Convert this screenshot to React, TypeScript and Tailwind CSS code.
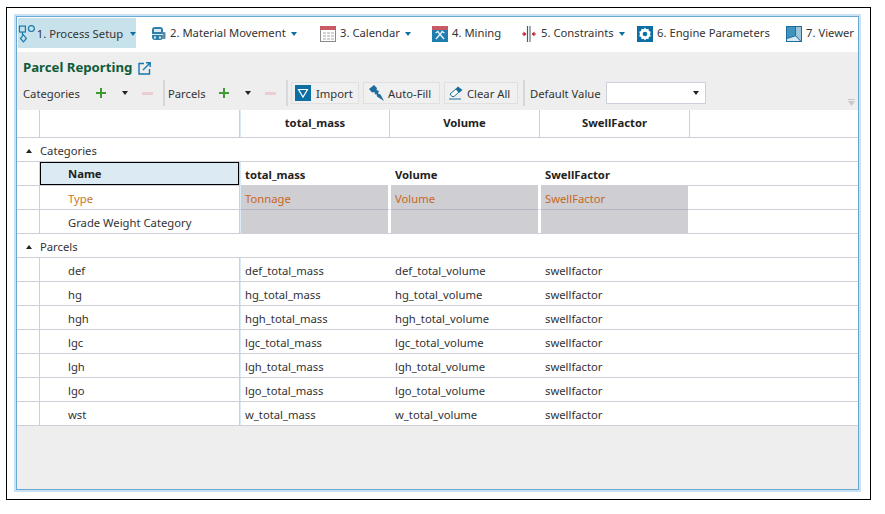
import type { ReactNode } from "react";

const parcels = [
  ["def", "def_total_mass", "def_total_volume"],
  ["hg", "hg_total_mass", "hg_total_volume"],
  ["hgh", "hgh_total_mass", "hgh_total_volume"],
  ["lgc", "lgc_total_mass", "lgc_total_volume"],
  ["lgh", "lgh_total_mass", "lgh_total_volume"],
  ["lgo", "lgo_total_mass", "lgo_total_volume"],
  ["wst", "w_total_mass", "w_total_volume"],
];

function Caret({ className }: { className: string }) {
  return (
    <svg width="6" height="4" viewBox="0 0 6 4" className={className}>
      <path d="M0 0h6L3 4z" fill="currentColor" />
    </svg>
  );
}

function ProcessIcon() {
  return (
    <svg width="19" height="20" viewBox="0 0 19 20" fill="none" stroke="#1478a8" strokeWidth="1.2">
      <rect x="1.500" y="2" width="6" height="6" />
      <circle cx="13.500" cy="4.500" r="3" />
      <path d="M4.500 8v3" />
      <path d="M5.500 11l3 3.500-3 3.500-3-3.500z" />
    </svg>
  );
}

function MovementIcon() {
  return (
    <svg width="15" height="15" viewBox="0 0 15 15" className="ml-[1px]">
      <rect x="1" y="1" width="11" height="13" rx="3" fill="#2f7fa8" />
      <rect x="3" y="3" width="7" height="3" fill="#d8ebf3" />
      <rect x="11" y="6" width="3.500" height="7" rx="1" fill="#5b8fa8" />
      <rect x="1" y="8" width="11" height="1" fill="#d8ebf3" />
      <rect x="3" y="10.500" width="2" height="2" fill="#d8ebf3" />
      <rect x="8" y="10.500" width="2" height="2" fill="#d8ebf3" />
    </svg>
  );
}

function CalendarIcon() {
  return (
    <svg width="16" height="16" viewBox="0 0 16 16">
      <rect x="0.500" y="0.500" width="15" height="15" fill="#fff" stroke="#8a8a8a" />
      <rect width="16" height="4" fill="#c75a63" />
      <path d="M3 6h3v2H3zm4 0h3v2H7zm4 0h3v2h-3zM3 9h3v2H3zm4 0h3v2H7zm4 0h3v2h-3zM3 12h3v2H3zm4 0h3v2H7zm4 0h3v2h-3z" fill="#d2d2d2" />
    </svg>
  );
}

function MiningIcon() {
  return (
    <svg width="16" height="16" viewBox="0 0 16 16">
      <rect width="16" height="16" fill="#1f7eae" />
      <rect width="16" height="4" fill="#c75a63" />
      <path d="M4 13l6-7M12 13L6 6M3.500 7l3-2M12.500 7l-3-2" stroke="#e6f0f5" strokeWidth="1.400" fill="none" />
    </svg>
  );
}

function ConstraintsIcon() {
  return (
    <svg width="16" height="16" viewBox="0 0 16 16">
      <path d="M6.500 0v16" stroke="#0e6f9f" strokeWidth="1.200" />
      <path d="M9 0v16" stroke="#4a5a66" strokeWidth="1" />
      <path d="M1 8h2M13 8h2" stroke="#c0202c" />
      <path d="M5.500 8L2.500 5.500v5zM10.500 8l3-2.500v5z" fill="#c0202c" />
    </svg>
  );
}

function EngineIcon() {
  return (
    <svg width="16" height="16" viewBox="0 0 16 16">
      <rect width="16" height="16" fill="#0b6fa4" />
      <path d="M8 1.500l1.300 1.800 2.100-.5.500 2.100 1.900.9-.8 2.200.8 2.200-1.900.9-.5 2.100-2.100-.5L8 14.500l-1.300-1.800-2.100.5-.5-2.100-1.900-.9.8-2.200-.8-2.200 1.900-.9.500-2.100 2.100.5z" fill="#fff" />
      <circle cx="8" cy="8" r="2.300" fill="#0b6fa4" />
    </svg>
  );
}

function ViewerIcon() {
  return (
    <svg width="16" height="16" viewBox="0 0 16 16">
      <rect width="16" height="16" fill="#1c6d9c" />
      <path d="M1 1h8v8.500L1 12z" fill="#3f94bd" />
      <path d="M10 1h5v14l-5-5.500z" fill="#9cc6da" />
      <path d="M1 13l8.500-2.700L14 15H1z" fill="#d9eaf2" />
    </svg>
  );
}

function Tab({ icon, label, caret, className }: { icon: ReactNode; label: string; caret?: boolean; className: string }) {
  return (
    <div className={`flex h-[33px] shrink-0 items-center ${className}`}>
      <span className="flex w-[20px] shrink-0">{icon}</span>
      <span className="whitespace-nowrap text-[#333]">{label}</span>
      {caret && <Caret className="ml-[5px] text-[#0e6f9f]" />}
    </div>
  );
}

function Plus() {
  return (
    <svg width="12" height="12" viewBox="0 0 12 12" className="shrink-0">
      <path d="M5 1h2v4h4v2H7v4H5V7H1V5h4z" fill="#3f9a35" />
    </svg>
  );
}

function Minus() {
  return <div className="h-[3px] w-[11px] bg-[#eccdd2]" />;
}

function Separator({ className }: { className: string }) {
  return <div className={`h-[26px] w-[2px] shrink-0 bg-[#d7d7dd] ${className}`} />;
}

function ToolButton({ icon, label, className }: { icon: ReactNode; label: string; className: string }) {
  return (
    <div className={`flex h-[22px] shrink-0 items-center border border-[#e0e0e0] bg-[#f0f0f0] text-[#333] ${className}`}>
      {icon}
      <span className="whitespace-nowrap pt-[2px]">{label}</span>
    </div>
  );
}

function Row({ name, a, b, c, nameClass = "", valueClass = "", shaded = "", strong = false, selected = false }: {
  name: string; a: string; b: string; c: string; nameClass?: string; valueClass?: string; shaded?: string; strong?: boolean; selected?: boolean;
}) {
  const cell = `flex items-center pl-[4px] ${shaded ? `bg-[#cfced2] ${shaded}` : "pt-[3px]"} ${valueClass} ${strong ? "font-bold text-[#222]" : ""}`;
  return (
    <div className="flex h-[24px] border-b border-[#cfcfd8] text-[#333]">
      <div className="w-[22px] shrink-0" />
      <div className={`flex w-[201px] shrink-0 border-x border-[#cfcfd8] ${nameClass}`}>
        {selected ? (
          <div className="flex w-[199px] items-center border border-black bg-[#dcebf3] pl-[27px] pt-[2px] font-bold text-[#222]">{name}</div>
        ) : (
          <div className="flex items-center pl-[28px] pt-[3px]">{name}</div>
        )}
      </div>
      <div className={`w-[150px] border-l border-l-[#d9ebf5] ${shaded ? "border-r-2 border-r-white" : ""} ${cell}`}>{a}</div>
      <div className={`w-[150px] border-l border-l-white ${shaded ? "border-r-2 border-r-white" : ""} ${cell}`}>{b}</div>
      <div className={`w-[148px] border-l border-l-white ${cell}`}>{c}</div>
    </div>
  );
}

function GroupRow({ label }: { label: string }) {
  return (
    <div className="flex h-[24px] items-center border-b border-[#cfcfd8] pt-[2px] text-[#333]">
      <svg width="6" height="4" viewBox="0 0 6 4" className="ml-[9px] text-[#222]">
        <path d="M3 0l3 4H0z" fill="currentColor" />
      </svg>
      <span className="ml-[8px] pt-[1px]">{label}</span>
    </div>
  );
}

export default function App() {
  return (
    <div className="h-[514px] w-[885px] bg-white pl-[6px] pt-[7px] font-['Noto_Sans','Open_Sans',sans-serif] text-[11.25px]">
      <div className="h-[493px] w-[865px] border border-black pl-[7px] pt-[6px]">
        <div className="h-[478px] w-[847px] bg-[#c9e2f5] p-[2px]">
          <div className="flex h-full flex-col border border-[#6aa8cf] bg-[#eeeeee]">
            <div className="flex h-[35px] shrink-0 overflow-hidden bg-white">
              <div className="ml-[1px] mt-[1px] flex h-[30px] w-[118px] shrink-0 items-center bg-[#c8e2ec] pt-[2px]">
                <ProcessIcon />
                <span className="whitespace-nowrap text-[#333]">1. Process Setup</span>
                <Caret className="ml-[7px] text-[#0e6f9f]" />
              </div>
              <Tab className="ml-[14px] w-[170px]" icon={<MovementIcon />} label="2. Material Movement" caret />
              <Tab className="w-[112px]" icon={<CalendarIcon />} label="3. Calendar" caret />
              <Tab className="w-[89px]" icon={<MiningIcon />} label="4. Mining" />
              <Tab className="w-[116px]" icon={<ConstraintsIcon />} label="5. Constraints" caret />
              <Tab className="w-[149px]" icon={<EngineIcon />} label="6. Engine Parameters" />
              <Tab className="w-[70px]" icon={<ViewerIcon />} label="7. Viewer" />
            </div>
            <div className="relative h-[58px] shrink-0">
              <div className="flex h-[30px] items-center pl-[6px] pt-[2px]">
                <span className="text-[13.2px] font-bold text-[#0f5c3a]">Parcel Reporting</span>
                <svg width="13" height="13" viewBox="0 0 13 13" fill="none" className="ml-[6px]" stroke="#1478b0" strokeWidth="1.400">
                  <path d="M6 1.500H1v10.500h10.500V7" />
                  <path d="M5 8l7-7M8 .8h4.200V5" />
                </svg>
              </div>
              <div className="flex h-[22px] items-center pl-[6px] text-[#333]">
                <span className="w-[72px] shrink-0 whitespace-nowrap pt-[2px]">Categories</span>
                <Plus />
                <span className="ml-[15px] flex"><Caret className="text-[#222]" /></span>
                <span className="ml-[14px]"><Minus /></span>
                <Separator className="ml-[10px]" />
                <span className="ml-[3px] w-[50px] shrink-0 pt-[2px]">Parcels</span>
                <Plus />
                <span className="ml-[15px] flex"><Caret className="text-[#222]" /></span>
                <span className="ml-[14px]"><Minus /></span>
                <Separator className="ml-[10px]" />
                <ToolButton
                  className="ml-[3px] w-[68px] pl-[3px]"
                  label="Import"
                  icon={
                    <svg width="16" height="16" viewBox="0 0 16 16" className="mr-[5px]">
                      <rect width="16" height="16" fill="#0b6fa4" />
                      <path d="M3.500 4.500h9L8 12z" fill="none" stroke="#fff" strokeWidth="1.200" />
                    </svg>
                  }
                />
                <ToolButton
                  className="ml-[4px] w-[77px] pl-[3px]"
                  label="Auto-Fill"
                  icon={
                    <svg width="18" height="18" viewBox="0 0 18 18" className="mr-[3px]">
                      <path d="M2 5L7 1l3 3-.5 2L12 7l-1 2.500 2.500 1L17 17l-7-4.500L9.500 10 8 10.500 7.500 8 5 8.500z" fill="#1c6d9c" />
                    </svg>
                  }
                />
                <ToolButton
                  className="ml-[4px] w-[74px] pl-[4px]"
                  label="Clear All"
                  icon={
                    <svg width="14" height="14" viewBox="0 0 14 14" className="mr-[4px]">
                      <path d="M1 8l6-5 3 3-5 4.500H3z" fill="#fff" stroke="#1c6d9c" />
                      <path d="M6.500 3l2.500-2.500L13.500 4 10 7z" fill="#1c6d9c" />
                      <path d="M0 13h12" stroke="#1c6d9c" />
                    </svg>
                  }
                />
                <Separator className="ml-[5px]" />
                <span className="ml-[5px] w-[76px] shrink-0 whitespace-nowrap pt-[2px]">Default Value</span>
                <div className="flex h-[22px] w-[100px] shrink-0 items-center justify-end border border-[#cfcfdc] bg-white pr-[6px]">
                  <Caret className="text-[#222]" />
                </div>
              </div>
              <svg width="7" height="7" viewBox="0 0 7 7" className="absolute bottom-[4px] right-[3px]">
                <path d="M0 0h7v1H0zM0 2h7L3.500 7z" fill="#c9c9c9" />
              </svg>
            </div>
            <div className="bg-white">
              <div className="flex h-[28px] border-b border-[#cfcfd8] font-bold text-[#222]">
                <div className="w-[22px] shrink-0" />
                <div className="w-[201px] shrink-0 border-x border-[#cfcfd8]" />
                <div className="flex w-[150px] items-center justify-center border-l border-r border-l-[#d9ebf5] border-r-[#cfcfd8]">total_mass</div>
                <div className="flex w-[150px] items-center justify-center border-r border-[#cfcfd8]">Volume</div>
                <div className="flex w-[150px] items-center justify-center border-r border-[#cfcfd8]">SwellFactor</div>
              </div>
              <GroupRow label="Categories" />
              <Row name="Name" a="total_mass" b="Volume" c="SwellFactor" strong selected />
              <Row name="Type" a="Tonnage" b="Volume" c="SwellFactor" nameClass="text-[#c8761e]" valueClass="text-[#c8671e]" shaded="-my-px border-b border-b-[#b8b6c4] pt-[5px]" />
              <Row name="Grade Weight Category" a="" b="" c="" shaded="pt-[3px]" />
              <GroupRow label="Parcels" />
              {parcels.map(([name, mass, volume]) => (
                <Row key={name} name={name} a={mass} b={volume} c="swellfactor" />
              ))}
            </div>
          </div>
        </div>
      </div>
    </div>
  );
}
